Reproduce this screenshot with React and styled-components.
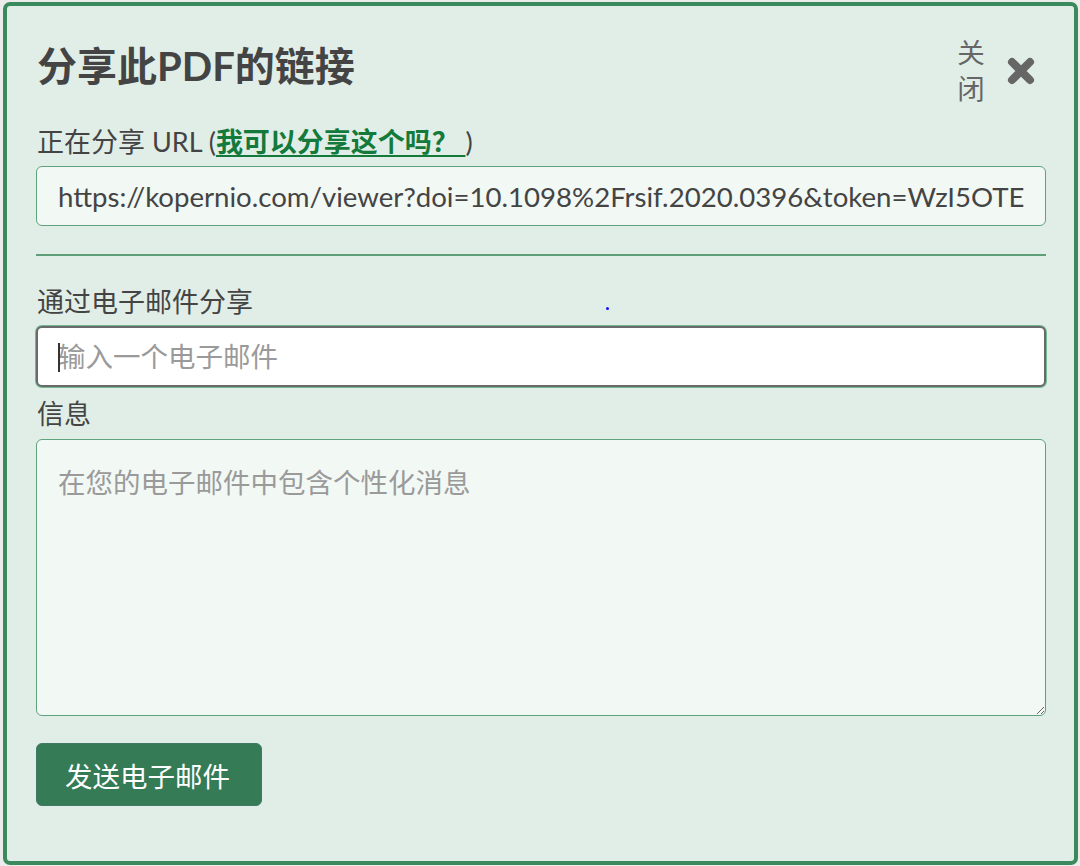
import React from "react";
import styled, { createGlobalStyle } from "styled-components";

const Global = createGlobalStyle`
  html, body { margin: 0; padding: 0; background: #ececec; }
  body { font-family: "Lato", "Noto Sans CJK SC", sans-serif; }
  * { box-sizing: border-box; }
`;

const Modal = styled.div`
  position: relative;
  margin: 2px 2px 1px 3px;
  width: 1075px;
  height: 863px;
  border: 4px solid #3b8a5e;
  border-radius: 7px;
  background: #e1eee7;
  padding: 0 28px 0 29px;
  display: flex;
  flex-direction: column;
`;

const Header = styled.div`
  display: flex;
  justify-content: space-between;
  align-items: flex-start;
  height: 52px;
  margin-top: 34px;
`;

const Title = styled.h1`
  margin: 0;
  padding-left: 1px;
  font-size: 40px;
  line-height: 52px;
  font-weight: 700;
  color: #444444;
`;

const CloseBox = styled.button`
  display: flex;
  align-items: center;
  gap: 20px;
  margin-top: -5px;
  margin-right: 10px;
  padding: 0;
  border: 0;
  background: transparent;
  cursor: pointer;
  font-family: inherit;
`;

const CloseText = styled.span`
  width: 30px;
  font-size: 27.5px;
  line-height: 36px;
  color: #666666;
  text-align: center;
  word-break: break-all;
`;

const Label = styled.label`
  display: block;
  font-size: 27px;
  line-height: 34px;
  color: #444444;
  margin-top: ${(p) => p.$mt}px;
  padding-left: 1px;
`;

const Link = styled.a`
  color: #137a3c;
  font-weight: 700;
  text-decoration: underline;
  text-underline-offset: 3px;
  white-space: pre;
`;

const UrlInput = styled.input`
  display: block;
  width: 100%;
  height: 60px;
  margin-top: 7px;
  padding: 0 21px;
  border: 1px solid #5fa27c;
  border-radius: 6px;
  background: #f2f8f4;
  font-family: inherit;
  font-size: 27.6px;
  color: #444444;
  outline: none;
`;

const Divider = styled.hr`
  margin: 28px 0 0;
  border: 0;
  height: 2px;
  background: #5e9f7a;
`;

const EmailWrap = styled.div`
  position: relative;
  margin-top: 7px;
`;

const EmailInput = styled.input`
  display: block;
  width: 100%;
  height: 61px;
  padding: 0 20px;
  border: 2px solid #6a6a6a;
  border-radius: 6px;
  box-shadow: 0 0 0 1px #74b892;
  background: #ffffff;
  font-family: inherit;
  font-size: 27.5px;
  color: #444444;
  outline: none;
  &::placeholder { color: #9a9a9a; }
`;

const Caret = styled.span`
  position: absolute;
  left: 22px;
  top: 17px;
  width: 2px;
  height: 29px;
  background: #333333;
`;

const Message = styled.textarea`
  display: block;
  width: 100%;
  height: 277px;
  margin-top: 8px;
  padding: 26px 21px;
  border: 1px solid #5fa27c;
  border-radius: 6px;
  background: #f2f8f4;
  font-family: inherit;
  font-size: 27.5px;
  line-height: 34px;
  color: #444444;
  outline: none;
  resize: vertical;
  &::placeholder { color: #9a9a9a; }
`;

const SendButton = styled.button`
  align-self: flex-start;
  margin-top: 27px;
  width: 226px;
  height: 63px;
  padding: 0 0 0 4px;
  border: 1px solid #3f7a67;
  border-radius: 6px;
  background: #347b56;
  color: #ffffff;
  font-family: inherit;
  font-size: 27.5px;
  text-align: left;
  text-indent: 24px;
  cursor: pointer;
`;

const Dot = styled.span`
  position: absolute;
  left: 599px;
  top: 301px;
  width: 3px;
  height: 3px;
  background: #1010ff;
  border-radius: 50%;
`;

function CloseIcon() {
  return (
    <svg width="30" height="30" viewBox="0 0 30 30" aria-hidden="true">
      <path
        d="M6 6 L24 24 M24 6 L6 24"
        stroke="#666666"
        strokeWidth="8"
        strokeLinecap="round"
      />
    </svg>
  );
}

export default function App() {
  return (
    <>
      <Global />
      <Modal>
        <Header>
          <Title>分享此PDF的链接</Title>
          <CloseBox type="button">
            <CloseText>关闭</CloseText>
            <CloseIcon />
          </CloseBox>
        </Header>
        <Label $mt={33}>
          正在分享 URL (<Link href="#">我可以分享这个吗？ </Link>)
        </Label>
        <UrlInput
          readOnly
          value="https://kopernio.com/viewer?doi=10.1098%2Frsif.2020.0396&token=WzI5OTE"
        />
        <Divider />
        <Label $mt={29}>通过电子邮件分享</Label>
        <EmailWrap>
          <EmailInput placeholder="输入一个电子邮件" />
          <Caret />
        </EmailWrap>
        <Label $mt={10}>信息</Label>
        <Message placeholder="在您的电子邮件中包含个性化消息" />
        <SendButton type="button">发送电子邮件</SendButton>
        <Dot />
      </Modal>
    </>
  );
}
